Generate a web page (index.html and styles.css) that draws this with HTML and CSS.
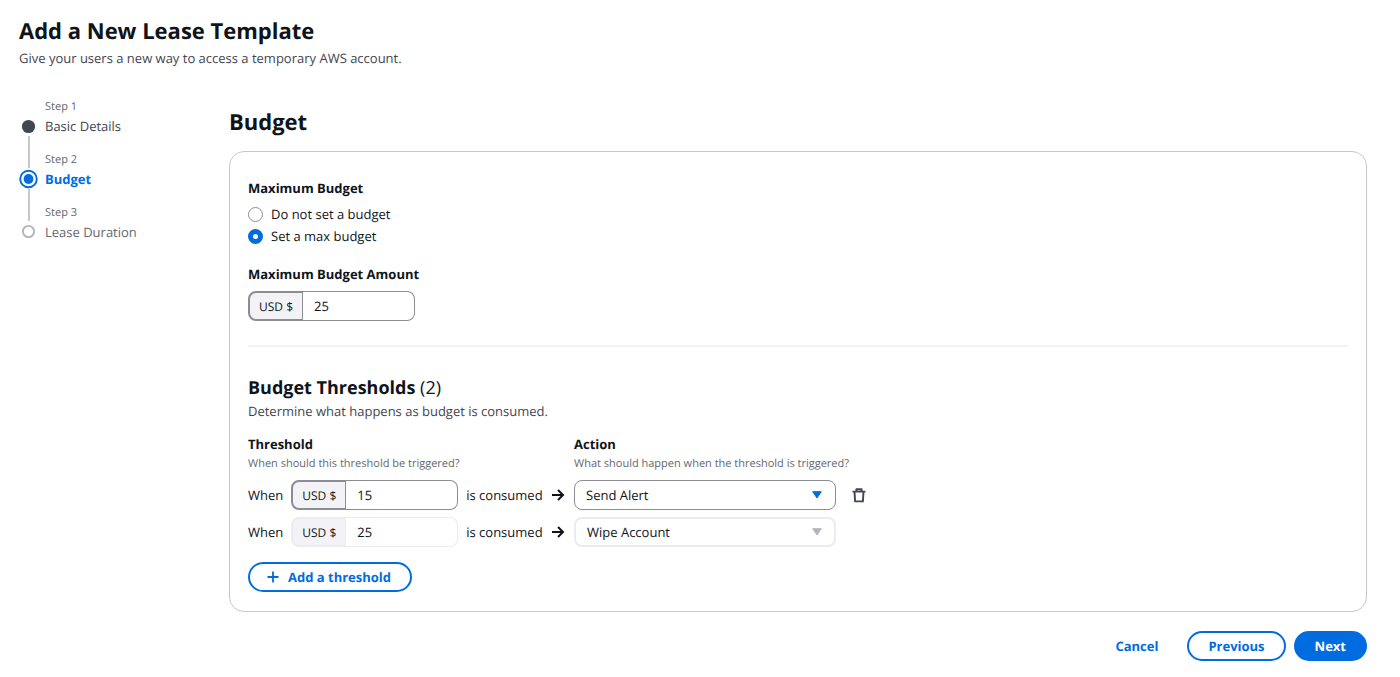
FILE: index.html
```html
<!DOCTYPE html>
<html lang="en">
<head>
<meta charset="utf-8">
<meta name="viewport" content="width=device-width, initial-scale=1">
<title>Add a New Lease Template</title>
<link rel="stylesheet" href="styles.css">
</head>
<body>
<header class="page-header">
  <h1 class="page-title">Add a New Lease Template</h1>
  <p class="lead">Give your users a new way to access a temporary AWS account.</p>
</header>
<div class="wizard">
  <nav aria-label="Steps">
    <ol class="steps">
      <li class="step step-done">
        <span class="step-number">Step 1</span>
        <span class="marker"><svg width="20" height="20" viewBox="0 0 20 20" aria-hidden="true"><circle cx="9.5" cy="10.5" r="6.6" fill="currentColor"/></svg></span>
        <a class="step-name" href="#basic-details">Basic Details</a>
        <span class="connector"></span>
      </li>
      <li class="step step-current" aria-current="step">
        <span class="step-number">Step 2</span>
        <span class="marker"><svg width="20" height="20" viewBox="0 0 20 20" aria-hidden="true"><circle cx="9.5" cy="10" r="8.3" fill="none" stroke="currentColor" stroke-width="1.9"/><circle cx="9.5" cy="10" r="4.9" fill="currentColor"/></svg></span>
        <span class="step-name">Budget</span>
        <span class="connector"></span>
      </li>
      <li class="step step-todo">
        <span class="step-number">Step 3</span>
        <span class="marker"><svg width="20" height="20" viewBox="0 0 20 20" aria-hidden="true"><circle cx="9.5" cy="9.5" r="5.6" fill="none" stroke="#b4b4bb" stroke-width="1.9"/></svg></span>
        <span class="step-name">Lease Duration</span>
      </li>
    </ol>
  </nav>
  <main>
    <h2 class="section-title">Budget</h2>
    <form id="budget-form">
      <div class="card">
        <fieldset class="group">
          <legend class="label">Maximum Budget</legend>
          <label class="choice"><input class="radio" type="radio" name="mode" value="none">Do not set a budget</label>
          <label class="choice"><input class="radio" type="radio" name="mode" value="max" checked>Set a max budget</label>
        </fieldset>
        <div class="amount-field">
          <label class="label" for="amount">Maximum Budget Amount</label>
          <div class="money"><span class="currency">USD $</span><input class="amount" id="amount" type="text" inputmode="decimal" value="25"></div>
        </div>
        <hr class="divider">
        <h3 class="subtitle">Budget Thresholds <span class="counter">(2)</span></h3>
        <p class="lead">Determine what happens as budget is consumed.</p>
        <div class="thresholds">
          <div>
            <div class="label" id="threshold-label">Threshold</div>
            <div class="hint">When should this threshold be triggered?</div>
          </div>
          <div class="action-head">
            <div class="label" id="action-label">Action</div>
            <div class="hint">What should happen when the threshold is triggered?</div>
          </div>
          <div class="condition">
            <span>When</span>
            <div class="money"><span class="currency">USD $</span><input class="amount" type="text" inputmode="decimal" value="15" aria-labelledby="threshold-label"></div>
            <span>is consumed</span>
            <svg class="arrow" width="14" height="14" viewBox="0 0 14 14" aria-hidden="true"><path d="M1 7h11M7 2l5 5-5 5" fill="none" stroke="currentColor" stroke-width="2"/></svg>
          </div>
          <div class="picker">
            <select class="select" aria-labelledby="action-label"><option>Send Alert</option><option>Freeze Account</option><option>Wipe Account</option></select>
            <svg class="caret" width="10" height="8" viewBox="0 0 10 8" aria-hidden="true"><path d="M.7.7h8.6L5 7z" fill="currentColor" stroke="currentColor" stroke-linejoin="round"/></svg>
          </div>
          <button class="icon-button" type="button" aria-label="Remove threshold"><svg width="16" height="16" viewBox="0 0 16 16" aria-hidden="true"><path d="M1.5 4.6h13M5.4 4.6V2.2h5.2v2.4M3.5 4.6l.6 9.8h7.8l.6-9.8" fill="none" stroke="currentColor" stroke-width="1.9" stroke-linejoin="round"/></svg></button>
          <div class="condition">
            <span>When</span>
            <div class="money money-disabled"><span class="currency">USD $</span><input class="amount" type="text" value="25" disabled aria-labelledby="threshold-label"></div>
            <span>is consumed</span>
            <svg class="arrow" width="14" height="14" viewBox="0 0 14 14" aria-hidden="true"><path d="M1 7h11M7 2l5 5-5 5" fill="none" stroke="currentColor" stroke-width="2"/></svg>
          </div>
          <div class="picker">
            <select class="select" disabled aria-labelledby="action-label"><option>Wipe Account</option></select>
            <svg class="caret" width="10" height="8" viewBox="0 0 10 8" aria-hidden="true"><path d="M.7.7h8.6L5 7z" fill="currentColor" stroke="currentColor" stroke-linejoin="round"/></svg>
          </div>
        </div>
        <button class="button button-add" type="button"><svg width="12" height="12" viewBox="0 0 12 12" aria-hidden="true"><path d="M6 .5v11M.5 6h11" fill="none" stroke="currentColor" stroke-width="1.8"/></svg>Add a threshold</button>
      </div>
      <div class="actions">
        <button class="button button-link" type="button">Cancel</button>
        <button class="button" type="button">Previous</button>
        <button class="button button-primary" type="submit">Next</button>
      </div>
    </form>
  </main>
</div>
</body>
</html>
```
FILE: styles.css
```css
* { box-sizing: border-box; }

body {
  margin: 0;
  padding: 15px 33px 16px 19px;
  background: #fff;
  color: #0f141a;
  font-family: "Open Sans", "Noto Sans", sans-serif;
  font-size: 13px;
  line-height: 20px;
  text-rendering: geometricPrecision;
}

h1, h2, h3, p, ol, fieldset, legend { margin: 0; padding: 0; }

input, select, button { font: inherit; color: inherit; text-rendering: inherit; }

.page-title, .section-title {
  font-size: 22px;
  line-height: 32px;
  font-weight: 700;
}

.page-title { margin-bottom: 1px; }

.lead { color: #424650; }

.wizard {
  display: grid;
  grid-template-columns: 210px minmax(0, 1fr);
  margin-top: 29px;
}

.steps { list-style: none; }

.step {
  display: grid;
  grid-template-columns: 20px 1fr;
  grid-template-rows: 19px 20px 14px;
  column-gap: 6px;
}

.step-number {
  grid-column: 2;
  color: #656871;
  font-size: 11px;
  line-height: 20px;
}

.marker { grid-area: 2 / 1; display: flex; }

.step-name {
  grid-area: 2 / 2;
  color: inherit;
  text-decoration: none;
}

.connector {
  grid-area: 3 / 1;
  justify-self: center;
  width: 2px;
  height: 32px;
  background: #c6c6cd;
}

.step-done { color: #424650; }
.step-current { color: #006ce0; font-weight: 700; }
.step-current .step-number { font-weight: 400; }
.step-current .marker { position: relative; }
.step-todo { color: #656871; }

main { padding-top: 9px; }

.card {
  margin-top: 13px;
  padding: 26px 18px 19px;
  border: 1px solid #c6c6cd;
  border-radius: 15px;
}

.group { border: 0; }

.label {
  display: block;
  font-weight: 700;
  line-height: 20px;
}

.group .label { margin-bottom: 5px; }

.choice {
  display: flex;
  align-items: center;
  gap: 8px;
  line-height: 22px;
}

.radio {
  appearance: none;
  width: 15px;
  height: 15px;
  margin: 0;
  border: 1px solid #8c8c94;
  border-radius: 50%;
  background: #fff;
}

.radio:checked { border: 5px solid #006ce0; }

.amount-field { margin-top: 17px; }
.amount-field .money { margin-top: 7px; }

.money {
  display: flex;
  width: 167px;
  height: 30px;
}

.currency {
  display: flex;
  align-items: center;
  padding: 2px 9px 0;
  border: 2px solid #8c8c94;
  border-right-width: 1px;
  border-radius: 8px 0 0 8px;
  background: #f3f3f7;
  font-size: 12px;
}

.amount {
  flex: 1;
  min-width: 0;
  padding: 0 11px;
  border: 1px solid #8c8c94;
  border-left: 0;
  border-radius: 0 8px 8px 0;
  background: #fff;
}

.money-disabled .currency, .money-disabled .amount { border-color: #ebebf0; }

.divider {
  height: 2px;
  margin: 24px 0 27px;
  border: 0;
  background: #f3f3f7;
}

.subtitle {
  font-size: 18px;
  line-height: 28px;
  font-weight: 700;
}

.subtitle + .lead { line-height: 18px; }

.counter { font-weight: 400; }

.thresholds {
  display: grid;
  grid-template-columns: 318px 262px auto;
  justify-content: start;
  gap: 7px 8px;
  margin-top: 14px;
}

.action-head { grid-column: 2 / 4; }

.hint {
  color: #656871;
  font-size: 11px;
  line-height: 19px;
}

.condition {
  grid-column: 1;
  display: flex;
  align-items: center;
  gap: 8px;
}

.picker { position: relative; }

.select {
  appearance: none;
  display: block;
  width: 100%;
  height: 30px;
  padding: 0 30px 0 11px;
  border: 1px solid #8c8c94;
  border-radius: 8px;
  background: #fff;
}

.select:disabled { border: 2px solid #ebebf0; opacity: 1; }

.caret {
  position: absolute;
  top: 11px;
  right: 14px;
  color: #006ce0;
  pointer-events: none;
}

.select:disabled + .caret { color: #b4b4bb; }

.icon-button {
  display: flex;
  align-items: center;
  padding: 0 7px;
  border: 0;
  background: none;
  color: #424650;
}

.button {
  display: flex;
  align-items: center;
  gap: 9px;
  height: 30px;
  padding: 0 19px;
  border: 2px solid #006ce0;
  border-radius: 15px;
  background: #fff;
  color: #006ce0;
  font-weight: 700;
}

.button-add { margin-top: 15px; padding: 0 19px 0 17px; }

.button-link { border-color: transparent; background: none; }

.button-primary { background: #006ce0; color: #fff; }

.actions {
  display: flex;
  justify-content: flex-end;
  gap: 8px;
  margin-top: 19px;
}
```
